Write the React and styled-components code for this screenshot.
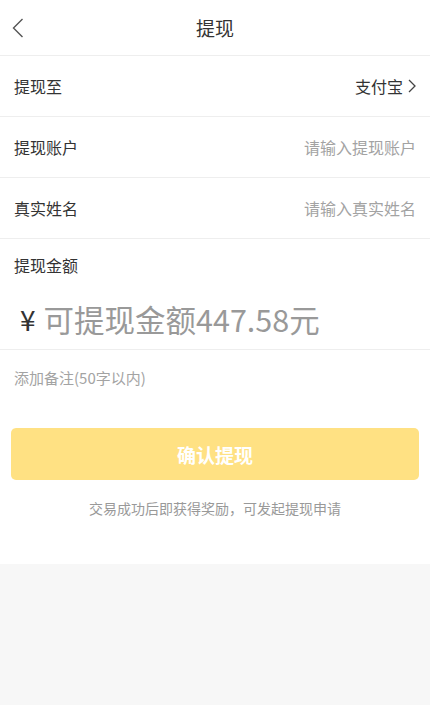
import React from "react";
import styled, { createGlobalStyle } from "styled-components";

const GlobalStyle = createGlobalStyle`
  html, body {
    margin: 0;
    padding: 0;
    background: #f7f7f7;
  }
  body {
    font-family: "Noto Sans CJK SC", "Noto Sans", sans-serif;
    color: #333;
  }
  * {
    box-sizing: border-box;
  }
`;

const Panel = styled.div`
  background: #fff;
  padding-bottom: 46px;
`;

const Header = styled.header`
  display: grid;
  grid-template-columns: 60px 1fr 60px;
  align-items: center;
  height: 56px;
  border-bottom: 1px solid #eeeeee;
`;

const BackButton = styled.button`
  display: flex;
  align-items: center;
  justify-content: flex-start;
  height: 100%;
  padding: 0 0 0 12px;
  background: none;
  border: 0;
  cursor: pointer;
`;

const Title = styled.h1`
  margin: 0;
  text-align: center;
  font-size: 19px;
  font-weight: 400;
  color: #333;
`;

const Row = styled.div`
  display: flex;
  align-items: center;
  justify-content: space-between;
  height: 61px;
  padding: 0 14px;
  border-bottom: 1px solid #eeeeee;
`;

const Label = styled.span`
  font-size: 16px;
  color: #333;
`;

const Value = styled.span`
  display: flex;
  align-items: center;
  gap: 5px;
  font-size: 16px;
  color: #333;
`;

const Input = styled.input`
  width: 200px;
  border: 0;
  outline: none;
  padding: 0;
  text-align: right;
  font-family: inherit;
  font-size: 16px;
  color: #333;
  background: transparent;

  &::placeholder {
    color: #a3a3a3;
  }
`;

const AmountBlock = styled.div`
  padding: 14px 14px 10px;
  border-bottom: 1px solid #eeeeee;
`;

const AmountLine = styled.div`
  display: flex;
  align-items: center;
  gap: 8px;
  height: 40px;
  margin-top: 22px;
  padding-left: 6px;
`;

const Currency = styled.span`
  font-size: 28px;
  color: #333;
  line-height: 1;
`;

const AmountInput = styled.input`
  flex: 1;
  min-width: 0;
  border: 0;
  outline: none;
  padding: 0;
  font-family: "Noto Sans CJK SC", "Noto Sans", sans-serif;
  font-size: 30.5px;
  color: #333;
  background: transparent;

  &::placeholder {
    color: #999;
  }
`;

const Remark = styled.input`
  display: block;
  width: 100%;
  height: 55px;
  border: 0;
  outline: none;
  padding: 0 14px;
  font-family: inherit;
  font-size: 15px;
  color: #333;

  &::placeholder {
    color: #a3a3a3;
  }
`;

const SubmitButton = styled.button`
  display: block;
  width: calc(100% - 22px);
  height: 52px;
  margin: 23px 11px 0;
  border: 0;
  border-radius: 5px;
  background: #ffe183;
  color: #fff;
  font-family: inherit;
  font-size: 19px;
  font-weight: 700;
  cursor: pointer;
`;

const Hint = styled.p`
  margin: 18px 0 0;
  text-align: center;
  font-size: 14px;
  line-height: 20px;
  color: #999;
`;

const ChevronLeft = () => (
  <svg width="12" height="20" viewBox="0 0 12 20" fill="none">
    <path d="M10.5 1L1.5 10l9 9" stroke="#555" strokeWidth="1.4" />
  </svg>
);

const ChevronRight = () => (
  <svg width="8" height="14" viewBox="0 0 8 14" fill="none">
    <path d="M1 1l6 6-6 6" stroke="#444" strokeWidth="1.3" />
  </svg>
);

const App = () => {
  return (
    <>
      <GlobalStyle />
      <Panel>
        <Header>
          <BackButton aria-label="返回">
            <ChevronLeft />
          </BackButton>
          <Title>提现</Title>
          <span />
        </Header>

        <Row>
          <Label>提现至</Label>
          <Value>
            支付宝
            <ChevronRight />
          </Value>
        </Row>
        <Row>
          <Label>提现账户</Label>
          <Input placeholder="请输入提现账户" />
        </Row>
        <Row>
          <Label>真实姓名</Label>
          <Input placeholder="请输入真实姓名" />
        </Row>

        <AmountBlock>
          <Label>提现金额</Label>
          <AmountLine>
            <Currency>¥</Currency>
            <AmountInput placeholder="可提现金额447.58元" />
          </AmountLine>
        </AmountBlock>

        <Remark placeholder="添加备注(50字以内)" />

        <SubmitButton>确认提现</SubmitButton>
        <Hint>交易成功后即获得奖励，可发起提现申请</Hint>
      </Panel>
    </>
  );
};

export default App;
